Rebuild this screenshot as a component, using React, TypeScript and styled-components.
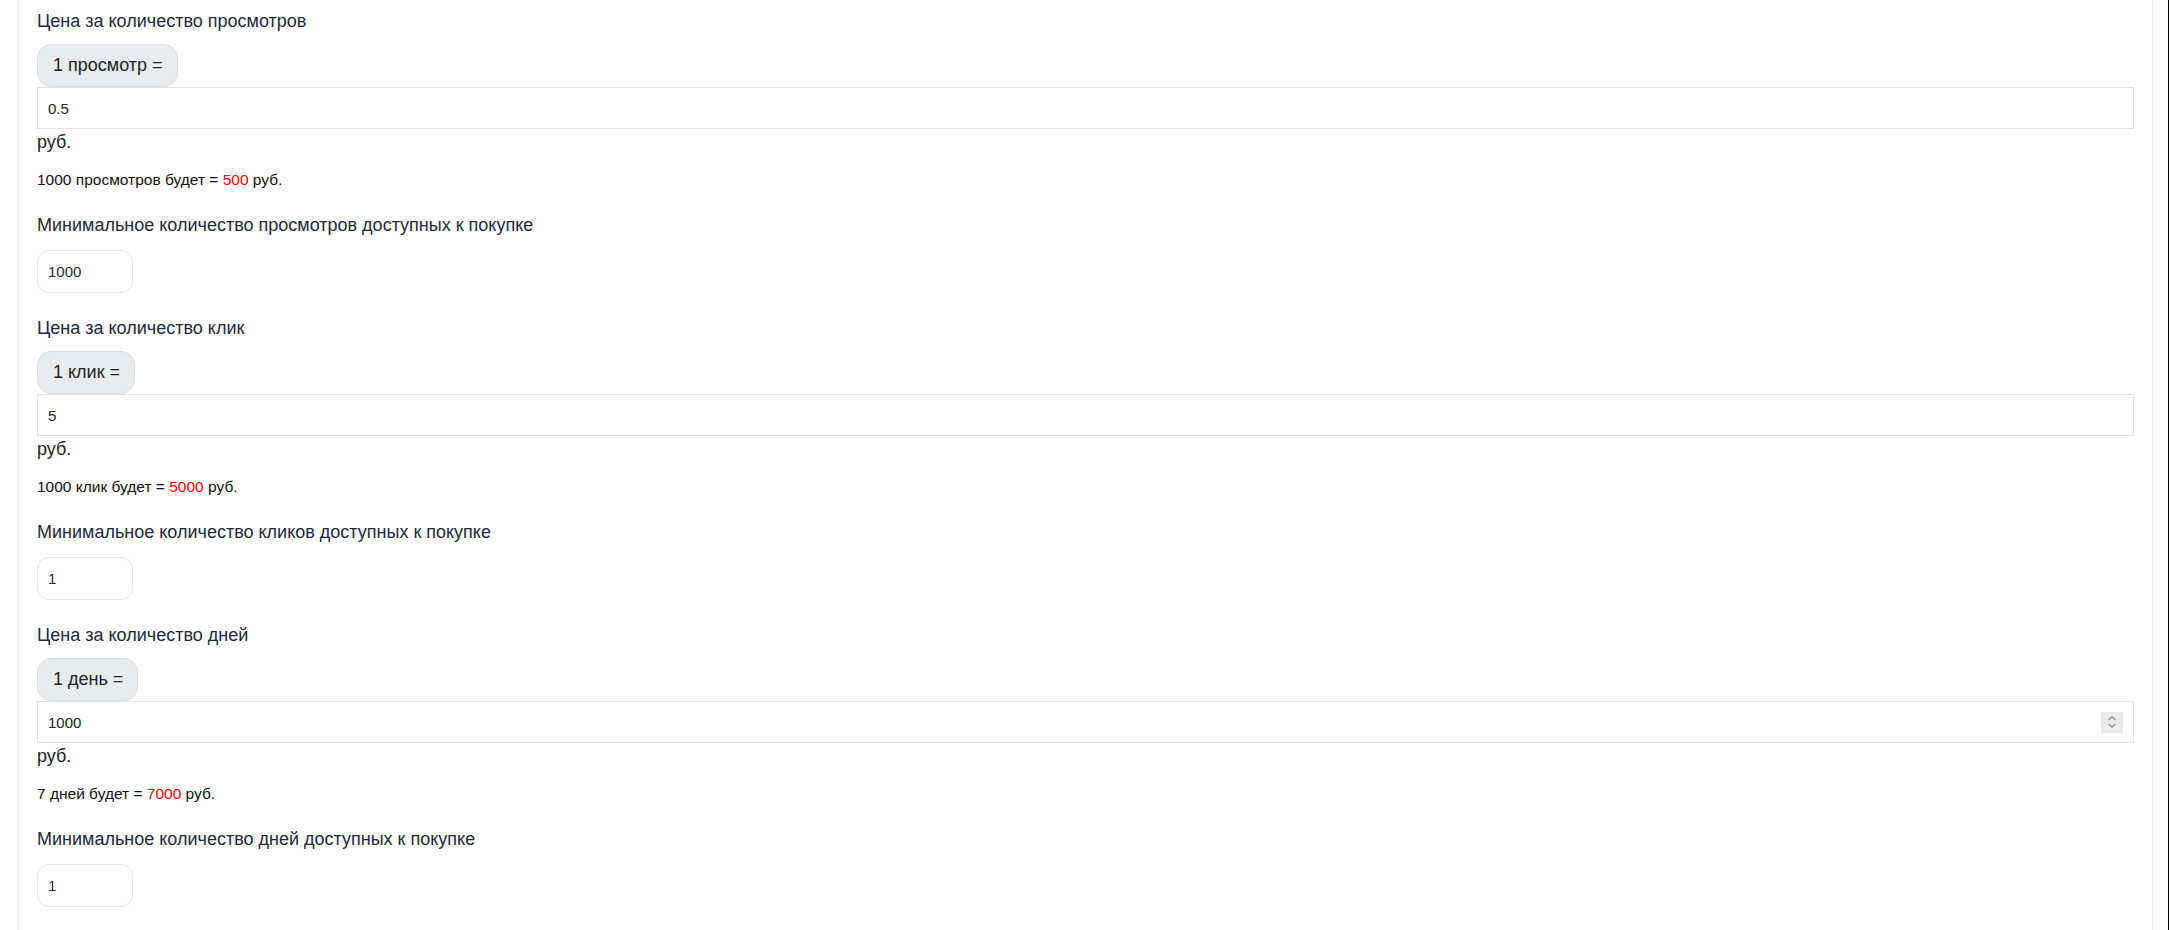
import styled, { createGlobalStyle } from "styled-components";

const GlobalStyle = createGlobalStyle`
  body {
    margin: 0;
    background: #ffffff;
    font-family: "Liberation Sans", Arial, sans-serif;
  }
`;

type Section = {
  title: string;
  unitLabel: string;
  price: string;
  summaryPrefix: string;
  total: string;
  minTitle: string;
  minValue: string;
  spinner?: boolean;
};

const sections: Section[] = [
  {
    title: "Цена за количество просмотров",
    unitLabel: "1 просмотр =",
    price: "0.5",
    summaryPrefix: "1000 просмотров будет =",
    total: "500",
    minTitle: "Минимальное количество просмотров доступных к покупке",
    minValue: "1000",
  },
  {
    title: "Цена за количество клик",
    unitLabel: "1 клик =",
    price: "5",
    summaryPrefix: "1000 клик будет =",
    total: "5000",
    minTitle: "Минимальное количество кликов доступных к покупке",
    minValue: "1",
  },
  {
    title: "Цена за количество дней",
    unitLabel: "1 день =",
    price: "1000",
    summaryPrefix: "7 дней будет =",
    total: "7000",
    minTitle: "Минимальное количество дней доступных к покупке",
    minValue: "1",
    spinner: true,
  },
];

const App = () => {
  return (
    <>
      <GlobalStyle />
      <Page>
        <Panel>
          {sections.map((s) => (
            <PriceSection key={s.title}>
              <Label>{s.title}</Label>
              <UnitBadge>{s.unitLabel}</UnitBadge>
              <PriceField>
                <PriceInput type="text" defaultValue={s.price} />
                {s.spinner && (
                  <Spinner>
                    <svg width="10" height="14" viewBox="0 0 10 14" fill="none">
                      <path d="M1.5 5 L5 1.8 L8.5 5" stroke="#8d8d99" strokeWidth="1.2" />
                      <path d="M1.5 9 L5 12.2 L8.5 9" stroke="#8d8d99" strokeWidth="1.2" />
                    </svg>
                  </Spinner>
                )}
              </PriceField>
              <Currency>руб.</Currency>
              <Summary>
                {s.summaryPrefix} <Total>{s.total}</Total> руб.
              </Summary>
              <MinLabel>{s.minTitle}</MinLabel>
              <MinInput type="text" defaultValue={s.minValue} />
            </PriceSection>
          ))}
        </Panel>
      </Page>
    </>
  );
};

const Page = styled.div`
  display: flex;
  min-height: 100vh;
  padding: 0 15px 0 18px;
  border-right: 1px solid #000;
  box-sizing: border-box;
`;

const Panel = styled.div`
  flex: 1;
  border-left: 1px solid #eeeeee;
  border-right: 1px solid #eeeeee;
  padding: 8px 18px 0 18px;
`;

const PriceSection = styled.section`
  display: flex;
  flex-direction: column;
  align-items: flex-start;
  margin-bottom: 22px;
`;

const Label = styled.div`
  font-size: 18px;
  line-height: 27px;
  color: #1e293b;
  margin-bottom: 9px;
`;

const UnitBadge = styled.span`
  display: inline-flex;
  align-items: center;
  box-sizing: border-box;
  height: 43px;
  padding: 0 14px 0 15px;
  font-size: 18px;
  color: #212529;
  background: #e9ecef;
  border: 1px solid #d9dde1;
  border-radius: 14px;
`;

const PriceField = styled.div`
  display: flex;
  align-items: center;
  align-self: stretch;
  box-sizing: border-box;
  height: 42px;
  border: 1px solid #e3e3e3;
  padding-right: 10px;
`;

const PriceInput = styled.input`
  flex: 1;
  height: 100%;
  border: none;
  outline: none;
  background: transparent;
  padding: 0 10px;
  font-family: "Liberation Sans", Arial, sans-serif;
  font-size: 15px;
  color: #212529;
`;

const Spinner = styled.div`
  display: flex;
  align-items: center;
  justify-content: center;
  width: 22px;
  height: 21px;
  background: #e9e9ed;
`;

const Currency = styled.div`
  font-size: 18px;
  line-height: 27px;
  color: #212529;
`;

const Summary = styled.p`
  margin: 12px 0 0 0;
  font-size: 15.5px;
  line-height: 24px;
  color: #111111;
`;

const Total = styled.span`
  color: #ff0000;
`;

const MinLabel = styled(Label)`
  margin: 20px 0 0 0;
`;

const MinInput = styled.input`
  box-sizing: border-box;
  width: 96px;
  height: 43px;
  margin-top: 11px;
  padding: 0 10px;
  border: 1px solid #e5e7eb;
  border-radius: 12px;
  outline: none;
  font-family: "Liberation Sans", Arial, sans-serif;
  font-size: 15px;
  color: #1e293b;
`;

export default App;
